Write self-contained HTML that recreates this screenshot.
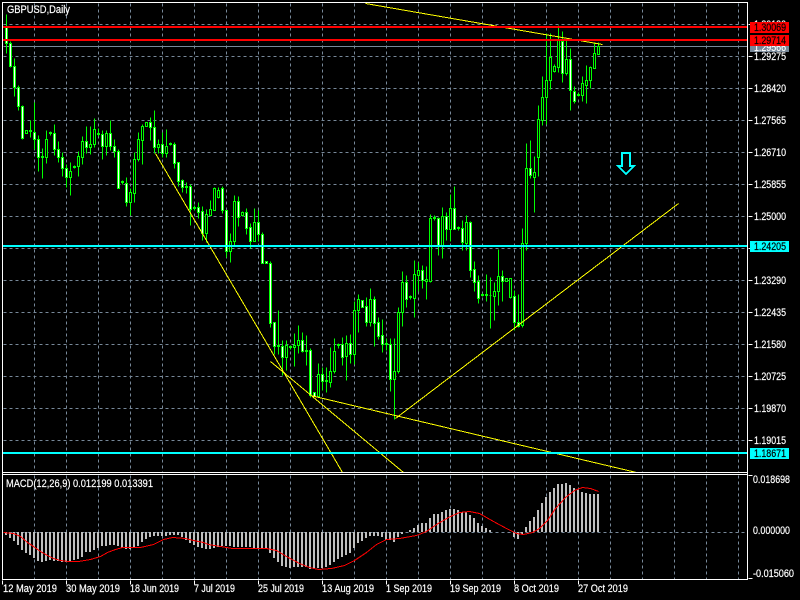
<!DOCTYPE html>
<html>
<head>
<meta charset="utf-8">
<title>GBPUSD,Daily</title>
<style>
html,body{margin:0;padding:0;background:#000;width:800px;height:600px;overflow:hidden}
svg{display:block;position:absolute;left:0;top:0}
text{font-family:"Liberation Sans",sans-serif;font-size:11px;fill:#fff;stroke:#fff;stroke-width:.2}
text.k{fill:#000;stroke:#000}
</style>
</head>
<body>
<svg width="800" height="600" viewBox="0 0 800 600">
<rect width="800" height="600" fill="#000"/>
<g shape-rendering="crispEdges" transform="translate(.5 .5)">
<!-- grid -->
<path fill="none" stroke="#778899" stroke-dasharray="3 3" d="M3 24H747M3 56H747M3 88H747M3 120H747M3 152H747M3 184H747M3 216H747M3 248H747M3 280H747M3 312H747M3 344H747M3 376H747M3 408H747M3 440H747M3 532H747"/>
<path fill="none" stroke="#778899" stroke-dasharray="3 3" d="M34 3V472M66 3V472M98 3V472M130 3V472M162 3V472M194 3V472M226 3V472M258 3V472M290 3V472M322 3V472M354 3V472M386 3V472M418 3V472M450 3V472M482 3V472M514 3V472M546 3V472M578 3V472M610 3V472M642 3V472M674 3V472M706 3V472M738 3V472M34 475V579M66 475V579M98 475V579M130 475V579M162 475V579M194 475V579M226 475V579M258 475V579M290 475V579M322 475V579M354 475V579M386 475V579M418 475V579M450 475V579M482 475V579M514 475V579M546 475V579M578 475V579M610 475V579M642 475V579M674 475V579M706 475V579M738 475V579"/>
<!-- gray bid line -->
<path stroke="#778899" d="M3 46H747"/>
<!-- wicks -->
<path fill="none" stroke="#00ff00" d="M6 14V53M10 41V67M14 58V96M18 85V110M22 105V139M30 120V137M34 102V149M38 135V171M42 148V178M46 130V163M50 131V135M54 124V155M58 141V162M62 152V176M66 164V187M70 162V195M74 165V168M78 151V176M82 136V164M86 126V153M90 126V154M94 118V147M98 128V136M102 130V159M106 130V155M110 120V150M114 139V157M118 149V188M122 180V184M126 177V206M130 188V215M134 152V202M138 132V161M142 124V164M150 117V140M154 110V153M158 139V153M162 132V157M166 129V157M170 142V145M174 142V168M178 162V186M182 179V192M186 182V193M190 184V225M194 205V210M198 202V218M202 206V240M206 209V242M210 200V215M214 187V210M218 187V198M222 186V213M226 210V257M230 233V262M234 195V245M238 196V226M242 211V216M246 208V234M250 223V248M254 208V241M258 210V241M262 232V263M270 261V327M274 322V354M278 310V354M282 340V375M286 340V370M290 345V349M294 333V366M298 325V353M302 332V352M306 335V365M310 348V397M314 392V396M318 363V397M322 367V390M326 367V392M330 347V387M334 338V373M338 343V348M342 337V365M346 335V380M350 334V363M354 301V364M358 294V332M366 297V326M370 288V326M374 296V346M378 317V339M382 319V352M386 338V350M390 338V391M394 338V419M398 307V373M402 271V326M406 275V307M410 295V299M414 260V317M418 262V291M422 265V288M426 266V299M430 214V282M434 215V220M438 217V255M442 207V258M446 212V240M450 194V241M454 186V229M458 226V230M462 220V250M466 215V250M470 221V277M474 261V291M478 275V303M482 293V296M486 274V301M490 277V328M494 282V320M498 249V305M502 270V301M510 278V298M514 290V330M518 294V327M522 228V327M526 143V250M530 140V178M534 156V212M538 105V176M542 76V125M546 33V124M550 33V89M554 64V72M558 25V72M562 31V82M566 40V75M570 48V110M574 86V103M578 92V96M582 76V101M586 65V103M590 66V88M594 42V68M598 42V54"/>
<!-- bear bodies (white fill) -->
<path fill="#fff" stroke="#00ff00" d="M5 27h2v16h-2zM9 43h2v23h-2zM13 66h2v21h-2zM17 87h2v19h-2zM21 106h2v32h-2zM33 132h2v7h-2zM37 139h2v18h-2zM53 133h2v16h-2zM57 149h2v8h-2zM61 157h2v11h-2zM65 168h2v9h-2zM85 141h2v6h-2zM101 134h2v12h-2zM109 133h2v13h-2zM113 146h2v5h-2zM117 151h2v37h-2zM125 183h2v19h-2zM149 122h2v5h-2zM153 127h2v20h-2zM161 144h2v9h-2zM173 144h2v19h-2zM177 162h2v19h-2zM181 180h2v7h-2zM189 186h2v23h-2zM197 207h2v5h-2zM201 211h2v22h-2zM221 188h2v22h-2zM225 210h2v41h-2zM237 201h2v16h-2zM245 212h2v16h-2zM249 227h2v14h-2zM257 222h2v12h-2zM261 234h2v29h-2zM265 261h2v2h-2zM269 263h2v60h-2zM273 322h2v24h-2zM281 346h2v11h-2zM301 340h2v11h-2zM309 350h2v45h-2zM313 392h2v4h-2zM321 374h2v7h-2zM341 344h2v13h-2zM349 343h2v11h-2zM361 300h2v7h-2zM365 306h2v16h-2zM373 299h2v24h-2zM377 322h2v14h-2zM381 335h2v9h-2zM389 344h2v35h-2zM405 282h2v17h-2zM421 270h2v10h-2zM437 218h2v27h-2zM445 216h2v13h-2zM453 208h2v21h-2zM461 228h2v14h-2zM469 222h2v48h-2zM473 269h2v13h-2zM477 281h2v17h-2zM501 276h2v5h-2zM513 296h2v26h-2zM517 322h2v4h-2zM529 168h2v7h-2zM561 41h2v32h-2zM569 59h2v31h-2zM573 91h2v10h-2z"/>
<!-- bull bodies (black fill) -->
<path fill="#000" stroke="#00ff00" d="M25 130h2v3h-2zM45 139h2v18h-2zM69 171h2v6h-2zM77 156h2v10h-2zM81 141h2v16h-2zM89 144h2v3h-2zM93 129h2v15h-2zM105 133h2v13h-2zM129 192h2v10h-2zM133 159h2v34h-2zM137 139h2v20h-2zM141 126h2v14h-2zM145 122h2v4h-2zM157 144h2v3h-2zM165 146h2v7h-2zM205 214h2v19h-2zM209 209h2v6h-2zM213 188h2v22h-2zM217 190h2v7h-2zM229 241h2v10h-2zM233 201h2v40h-2zM241 212h2v3h-2zM253 222h2v19h-2zM285 345h2v12h-2zM293 345h2v2h-2zM297 340h2v5h-2zM317 374h2v22h-2zM329 371h2v11h-2zM333 351h2v20h-2zM345 343h2v13h-2zM353 310h2v44h-2zM357 299h2v11h-2zM369 299h2v23h-2zM393 371h2v8h-2zM397 312h2v59h-2zM401 282h2v30h-2zM413 274h2v24h-2zM417 270h2v5h-2zM425 279h2v2h-2zM429 218h2v63h-2zM441 216h2v29h-2zM449 208h2v21h-2zM465 222h2v21h-2zM493 291h2v5h-2zM497 276h2v15h-2zM505 278h2v3h-2zM509 278h2v19h-2zM521 243h2v82h-2zM525 168h2v75h-2zM533 172h2v5h-2zM537 119h2v38h-2zM541 97h2v23h-2zM545 80h2v17h-2zM549 57h2v23h-2zM553 66h2v5h-2zM557 40h2v27h-2zM565 59h2v14h-2zM581 83h2v12h-2zM585 80h2v5h-2zM589 67h2v13h-2zM593 53h2v15h-2zM597 46h2v8h-2z"/>
<!-- small filled dojis -->
<path fill="#00ff00" stroke="#00ff00" d="M29 130h2v1h-2zM41 156h2v1h-2zM49 132h2v1h-2zM73 166h2v1h-2zM97 133h2v1h-2zM121 181h2v1h-2zM169 143h2v1h-2zM185 186h2v1h-2zM193 207h2v1h-2zM277 345h2v1h-2zM289 346h2v1h-2zM305 350h2v1h-2zM325 380h2v1h-2zM337 344h2v1h-2zM385 343h2v1h-2zM409 296h2v1h-2zM433 217h2v1h-2zM457 227h2v1h-2zM481 294h2v1h-2zM485 294h2v1h-2zM489 295h2v0h-2zM577 94h2v1h-2z"/>
<!-- MACD histogram -->
<path fill="none" stroke="#c0c0c0" stroke-width="2" transform="translate(-.5 -.5)" d="M6 532v3M10 532v6M14 532v9M18 532v13M22 532v18M26 532v21M30 532v23M34 532v26M38 532v29M42 532v30M46 532v29M50 532v28M54 532v29M58 532v29M62 532v30M66 532v30M70 532v29M74 532v28M78 532v27M82 532v25M86 532v20M90 532v20M94 532v18M98 532v16M102 532v14M106 532v14M110 532v13M114 532v13M118 532v14M122 532v16M126 532v17M130 532v17M134 532v15M138 532v14M142 532v10M146 532v7M150 532v5M154 532v4M158 532v4M162 532v4M166 532v4M170 532v3M174 532v3M178 532v3M182 532v5M186 532v8M190 532v11M194 532v13M198 532v15M202 532v16M206 532v17M210 532v17M214 532v16M218 532v15M222 532v14M226 532v14M230 532v14M234 532v15M238 532v15M242 532v15M246 532v15M250 532v15M254 532v16M258 532v17M262 532v17M266 532v17M270 532v21M274 532v26M278 532v30M282 532v34M286 532v35M290 532v36M294 532v35M298 532v35M302 532v35M306 532v35M310 532v37M314 532v37M318 532v36M322 532v36M326 532v35M330 532v33M334 532v30M338 532v27M342 532v25M346 532v23M350 532v21M354 532v16M358 532v11M362 532v9M366 532v6M370 532v4M374 532v4M378 532v4M382 532v5M386 532v8M390 532v8M394 532v10M398 532v5M402 532v2M410 532v-2M414 532v-4M418 532v-7M422 532v-9M426 532v-9M430 532v-14M434 532v-18M438 532v-18M442 532v-20M446 532v-22M450 532v-23M454 532v-23M458 532v-22M462 532v-20M466 532v-20M470 532v-17M474 532v-14M478 532v-9M482 532v-6M486 532v-4M490 532v-2M514 532v5M518 532v7M522 532v2M526 532v-5M530 532v-11M534 532v-15M538 532v-22M542 532v-29M546 532v-35M550 532v-40M554 532v-44M558 532v-48M562 532v-48M566 532v-49M570 532v-47M574 532v-44M578 532v-42M582 532v-40M586 532v-39M590 532v-38M594 532v-38M598 532v-38"/>
<!-- MACD signal -->
<polyline fill="none" stroke="#ff0000" points="3,532 13,533 20,536 27,542 33,546 40,551 47,555 53,558 60,560 68,561 78,561 90,559 100,556 107,552 115,549 122,547 140,547 153,544 163,539 172,537 185,538 193,540 203,542 208,544 220,546 232,548 243,548 266,548 276,550 286,556 299,563 309,567 318,569 331,568 344,565 354,560 366,552 376,544 386,539 399,538 416,535 426,531 436,524 448,517 459,512 469,511 479,513 493,521 506,528 516,533 523,534 532,532 539,528 547,520 555,508 565,497 574,490 582,487 590,488 598,491"/>
<!-- trendlines -->
<path fill="none" stroke="#ffff00" d="M365 3L602 44M155 153L342 472M270 361L403 472M310 395L636 472M395 418L678 203"/>
<!-- horizontal levels -->
<path fill="none" stroke="#ff0000" stroke-width="2" transform="translate(-.5 -.5)" d="M3 27H747M3 40H747"/>
<path fill="none" stroke="#00ffff" stroke-width="2" transform="translate(-.5 -.5)" d="M3 246H747M3 453H747"/>
<!-- arrow -->
<path fill="none" stroke="#00ffff" stroke-width="2" transform="translate(-.5 -.5)" d="M622 153H630V166H634L626 174L618 166H622Z"/>
<!-- frame -->
<path fill="none" stroke="#ffffff" d="M2 2H747V579H2ZM2 472H747M2 474H747"/>
<!-- ticks -->
<path fill="none" stroke="#ffffff" d="M748 24H752M748 56H752M748 88H752M748 120H752M748 152H752M748 184H752M748 216H752M748 248H752M748 280H752M748 312H752M748 344H752M748 376H752M748 408H752M748 440H752M748 475H752M748 578H752M2 580V584M66 580V584M130 580V584M194 580V584M258 580V584M322 580V584M386 580V584M450 580V584M514 580V584M578 580V584"/>
</g>
<!-- axis text -->
<text x="754" y="28" textLength="32" lengthAdjust="spacingAndGlyphs">1.30130</text>
<text x="754" y="60" textLength="32" lengthAdjust="spacingAndGlyphs">1.29275</text>
<text x="754" y="92" textLength="32" lengthAdjust="spacingAndGlyphs">1.28420</text>
<text x="754" y="124" textLength="32" lengthAdjust="spacingAndGlyphs">1.27565</text>
<text x="754" y="156" textLength="32" lengthAdjust="spacingAndGlyphs">1.26710</text>
<text x="754" y="188" textLength="32" lengthAdjust="spacingAndGlyphs">1.25855</text>
<text x="754" y="220" textLength="32" lengthAdjust="spacingAndGlyphs">1.25000</text>
<text x="754" y="284" textLength="32" lengthAdjust="spacingAndGlyphs">1.23290</text>
<text x="754" y="316" textLength="32" lengthAdjust="spacingAndGlyphs">1.22435</text>
<text x="754" y="348" textLength="32" lengthAdjust="spacingAndGlyphs">1.21580</text>
<text x="754" y="380" textLength="32" lengthAdjust="spacingAndGlyphs">1.20725</text>
<text x="754" y="412" textLength="32" lengthAdjust="spacingAndGlyphs">1.19870</text>
<text x="754" y="444" textLength="32" lengthAdjust="spacingAndGlyphs">1.19015</text>
<!-- price labels -->
<rect x="750" y="46" width="39" height="6" fill="#778899" shape-rendering="crispEdges"/>
<text x="754" y="51" textLength="32" lengthAdjust="spacingAndGlyphs">1.29566</text>
<rect x="750" y="22" width="39" height="11" fill="#ff0000" shape-rendering="crispEdges"/>
<text class="k" x="754" y="31" textLength="32" lengthAdjust="spacingAndGlyphs">1.30069</text>
<rect x="750" y="35" width="39" height="11" fill="#ff0000" shape-rendering="crispEdges"/>
<text class="k" x="754" y="44" textLength="32" lengthAdjust="spacingAndGlyphs">1.29714</text>
<rect x="750" y="241" width="39" height="11" fill="#00ffff" shape-rendering="crispEdges"/>
<text class="k" x="754" y="250" textLength="32" lengthAdjust="spacingAndGlyphs">1.24205</text>
<rect x="750" y="448" width="39" height="11" fill="#00ffff" shape-rendering="crispEdges"/>
<text class="k" x="754" y="457" textLength="32" lengthAdjust="spacingAndGlyphs">1.18671</text>
<!-- macd axis -->
<text x="753" y="483" textLength="37" lengthAdjust="spacingAndGlyphs">0.018698</text>
<text x="753" y="534" textLength="37" lengthAdjust="spacingAndGlyphs">0.000000</text>
<text x="753" y="577" textLength="41" lengthAdjust="spacingAndGlyphs">-0.015060</text>
<!-- titles -->
<text x="7" y="13" textLength="63" lengthAdjust="spacingAndGlyphs">GBPUSD,Daily</text>
<text x="6" y="487" textLength="147" lengthAdjust="spacingAndGlyphs">MACD(12,26,9) 0.012199 0.013391</text>
<!-- date axis -->
<text x="3" y="592" textLength="54" lengthAdjust="spacingAndGlyphs">12 May 2019</text>
<text x="66" y="592" textLength="54" lengthAdjust="spacingAndGlyphs">30 May 2019</text>
<text x="130" y="592" textLength="49" lengthAdjust="spacingAndGlyphs">18 Jun 2019</text>
<text x="194" y="592" textLength="41" lengthAdjust="spacingAndGlyphs">7 Jul 2019</text>
<text x="258" y="592" textLength="46" lengthAdjust="spacingAndGlyphs">25 Jul 2019</text>
<text x="322" y="592" textLength="52" lengthAdjust="spacingAndGlyphs">13 Aug 2019</text>
<text x="386" y="592" textLength="46" lengthAdjust="spacingAndGlyphs">1 Sep 2019</text>
<text x="450" y="592" textLength="51" lengthAdjust="spacingAndGlyphs">19 Sep 2019</text>
<text x="514" y="592" textLength="45" lengthAdjust="spacingAndGlyphs">8 Oct 2019</text>
<text x="578" y="592" textLength="50" lengthAdjust="spacingAndGlyphs">27 Oct 2019</text>
</svg>
</body>
</html>
